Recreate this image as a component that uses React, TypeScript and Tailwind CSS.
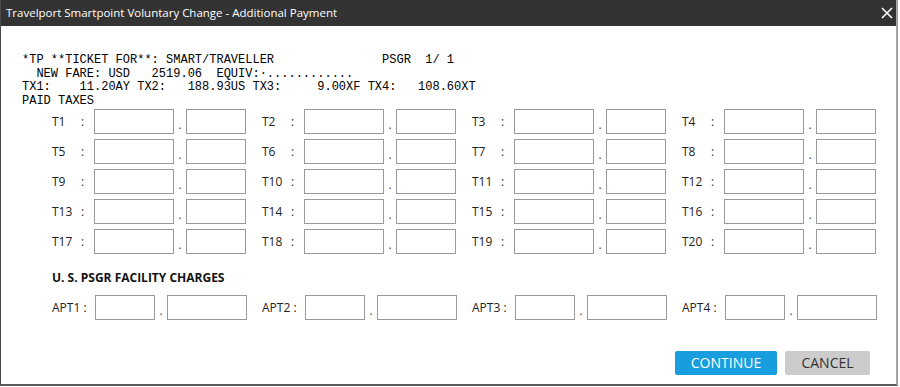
const ui = { fontFamily: '"Open Sans", "Noto Sans", Arial, sans-serif' };
const mono = { fontFamily: '"Liberation Mono", "Courier New", monospace' };

const TERMINAL = [
  "*TP **TICKET FOR**: SMART/TRAVELLER               PSGR  1/ 1",
  "  NEW FARE: USD   2519.06  EQUIV:·............",
  "TX1:    11.20AY TX2:   188.93US TX3:     9.00XF TX4:   108.60XT",
  "PAID TAXES",
];

function Box({ w }: { w: number }) {
  return (
    <input
      type="text"
      className={`h-[25px] border border-[#999999] bg-white outline-none ${w === 80 ? "w-[80px]" : "w-[60px]"}`}
    />
  );
}

function TaxField({ n }: { n: number }) {
  return (
    <div className="flex items-center w-[210px]">
      <div className="flex items-center w-[42px] text-[12px] text-[#222]" style={ui}>
        <span className="w-[29px]">T{n}</span>
        <span className="text-[#333]">:</span>
      </div>
      <Box w={80} />
      <span className="w-[12px] text-center text-[12px] text-[#444] pt-[6px]" style={ui}>.</span>
      <Box w={60} />
    </div>
  );
}

function AptField({ n }: { n: number }) {
  return (
    <div className="flex items-center w-[210px]">
      <div className="w-[43px] text-[12px] text-[#222] whitespace-pre" style={ui}>APT{n} :</div>
      <Box w={60} />
      <span className="w-[12px] text-center text-[12px] text-[#444] pt-[6px]" style={ui}>.</span>
      <Box w={80} />
    </div>
  );
}

export default function App() {
  const taxes = Array.from({ length: 20 }, (_, i) => i + 1);

  return (
    <div className="w-[900px] h-[387px] bg-white">
      <div className="w-[898px] h-[386px] flex flex-col border-l border-b-2 border-l-[#4a4a4a] border-b-[#5a5a5a] border-r-2 border-r-[#a3a3a3] bg-white">
        {/* title bar */}
        <div className="h-[26px] shrink-0 bg-[#333333] flex items-center justify-between pl-[5px] pr-[3px]">
          <span className="text-white text-[11.5px] leading-none" style={ui}>
            Travelport Smartpoint Voluntary Change - Additional Payment
          </span>
          <svg width="12" height="12" viewBox="0 0 12 12">
            <path d="M1 1 L11 11 M11 1 L1 11" stroke="#ffffff" strokeWidth="1.6" />
          </svg>
        </div>

        <div className="flex-1 flex flex-col pl-[21px] pt-[28px]">
          <pre className="text-[12px] leading-[13.5px] text-black" style={mono}>
            {TERMINAL.join("\n")}
          </pre>

          <div className="ml-[30px] mt-[1px] flex flex-col gap-[5px]">
            {[0, 1, 2, 3, 4].map((r) => (
              <div key={r} className="flex">
                {taxes.slice(r * 4, r * 4 + 4).map((n) => (
                  <TaxField key={n} n={n} />
                ))}
              </div>
            ))}
          </div>

          <p className="ml-[30px] mt-[16px] h-[16px] leading-[16px] text-[12px] font-bold text-[#111]" style={ui}>
            U. S. PSGR FACILITY CHARGES
          </p>

          <div className="ml-[30px] mt-[9px] flex">
            {[1, 2, 3, 4].map((n) => (
              <AptField key={n} n={n} />
            ))}
          </div>

          <div className="mt-[31px] flex justify-end gap-[8px] pr-[26px]">
            <button className="w-[102px] h-[24px] rounded-[2px] bg-[#189ddf] text-white text-[14px] leading-none" style={ui}>
              CONTINUE
            </button>
            <button className="w-[85px] h-[24px] rounded-[2px] bg-[#cccccc] text-[#333] text-[14px] leading-none" style={ui}>
              CANCEL
            </button>
          </div>
        </div>
      </div>
    </div>
  );
}
